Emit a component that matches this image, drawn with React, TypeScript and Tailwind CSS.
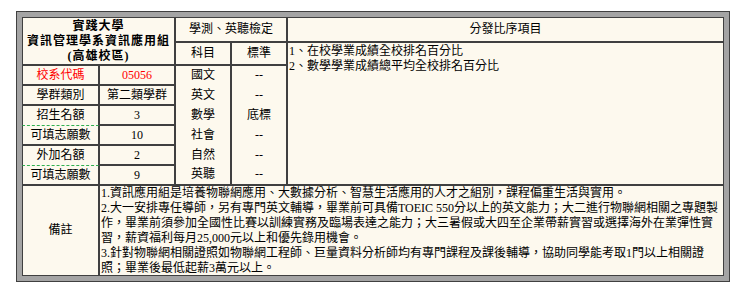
import React from "react";

const base = "bg-[#fdf9ee] border-[#404040]";
const center = "flex items-center justify-center";

export default function App() {
  const subjects = [
    ["國文", "--"],
    ["英文", "--"],
    ["數學", "底標"],
    ["社會", "--"],
    ["自然", "--"],
    ["英聽", "--"],
  ];
  return (
    <div className="min-h-[293px] w-[737px] bg-white pt-[11px] pl-[16px]">
      <div className="w-[714px] border border-[#404040] bg-[#a4a4a4] p-[5px]">
        <div className="grid grid-cols-[77px_76px_56px_56px_437px] grid-rows-[25px_23px_20px_20px_20px_20px_20px_20px_91px] font-['Liberation_Serif','Noto_Sans_CJK_TC',serif] text-[12px] leading-[15px] text-black">
          {/* header left */}
          <div className={`${base} ${center} col-start-1 col-span-2 row-start-1 row-span-2 border flex-col text-center font-bold tracking-[1px]`}>
            <div>實踐大學</div>
            <div>資訊管理學系資訊應用組</div>
            <div>(高雄校區)</div>
          </div>
          <div className={`${base} ${center} col-start-3 col-span-2 row-start-1 border`}>學測、英聽檢定</div>
          <div className={`${base} ${center} col-start-5 row-start-1 border`}>分發比序項目</div>
          <div className={`${base} ${center} col-start-3 row-start-2 border`}>科目</div>
          <div className={`${base} ${center} col-start-4 row-start-2 border`}>標準</div>
          <div className={`${base} col-start-5 row-start-2 row-span-7 border px-px pt-px`}>
            <div>1、在校學業成績全校排名百分比</div>
            <div>2、數學學業成績總平均全校排名百分比</div>
          </div>

          {/* left rows */}
          <div className={`${base} ${center} col-start-1 row-start-3 border text-[#ff0000]`}>校系代碼</div>
          <div className={`${base} ${center} col-start-2 row-start-3 border text-[#ff0000]`}>05056</div>
          <div className={`${base} ${center} col-start-1 row-start-4 border`}>學群類別</div>
          <div className={`${base} ${center} col-start-2 row-start-4 border`}>第二類學群</div>
          <div className={`${base} ${center} col-start-1 row-start-5 border border-b-0`}>招生名額</div>
          <div className={`${base} ${center} col-start-2 row-start-5 border`}>3</div>
          <div className={`${base} ${center} col-start-1 row-start-6 border border-t-[#30b050] [border-top-style:dashed]`}>可填志願數</div>
          <div className={`${base} ${center} col-start-2 row-start-6 border`}>10</div>
          <div className={`${base} ${center} col-start-1 row-start-7 border border-b-0`}>外加名額</div>
          <div className={`${base} ${center} col-start-2 row-start-7 border`}>2</div>
          <div className={`${base} ${center} col-start-1 row-start-8 border border-t-[#30b050] [border-top-style:dashed]`}>可填志願數</div>
          <div className={`${base} ${center} col-start-2 row-start-8 border`}>9</div>

          {/* subjects */}
          {subjects.map(([s, v], i) => {
            const edge = i === 0 ? "border-t" : i === subjects.length - 1 ? "border-b" : "";
            return (
              <React.Fragment key={s}>
                <div
                  className={`${base} ${center} col-start-3 border-x ${edge}`}
                  style={{ gridRowStart: i + 3 }}
                >
                  {s}
                </div>
                <div
                  className={`${base} ${center} col-start-4 border-x ${edge}`}
                  style={{ gridRowStart: i + 3 }}
                >
                  {v}
                </div>
              </React.Fragment>
            );
          })}

          {/* notes */}
          <div className={`${base} ${center} col-start-1 row-start-9 border`}>備註</div>
          <div className={`${base} col-start-2 col-span-4 row-start-9 border whitespace-nowrap px-px`}>
            1.資訊應用組是培養物聯網應用、大數據分析、智慧生活應用的人才之組別，課程偏重生活與實用。
            <br />
            2.大一安排專任導師，另有專門英文輔導，畢業前可具備TOEIC 550分以上的英文能力；大二進行物聯網相關之專題製
            <br />
            作，畢業前須參加全國性比賽以訓練實務及臨場表達之能力；大三暑假或大四至企業帶薪實習或選擇海外在業彈性實
            <br />
            習，薪資福利每月25,000元以上和優先錄用機會。
            <br />
            3.針對物聯網相關證照如物聯網工程師、巨量資料分析師均有專門課程及課後輔導，協助同學能考取1門以上相關證
            <br />
            照；畢業後最低起薪3萬元以上。
          </div>
        </div>
      </div>
    </div>
  );
}
